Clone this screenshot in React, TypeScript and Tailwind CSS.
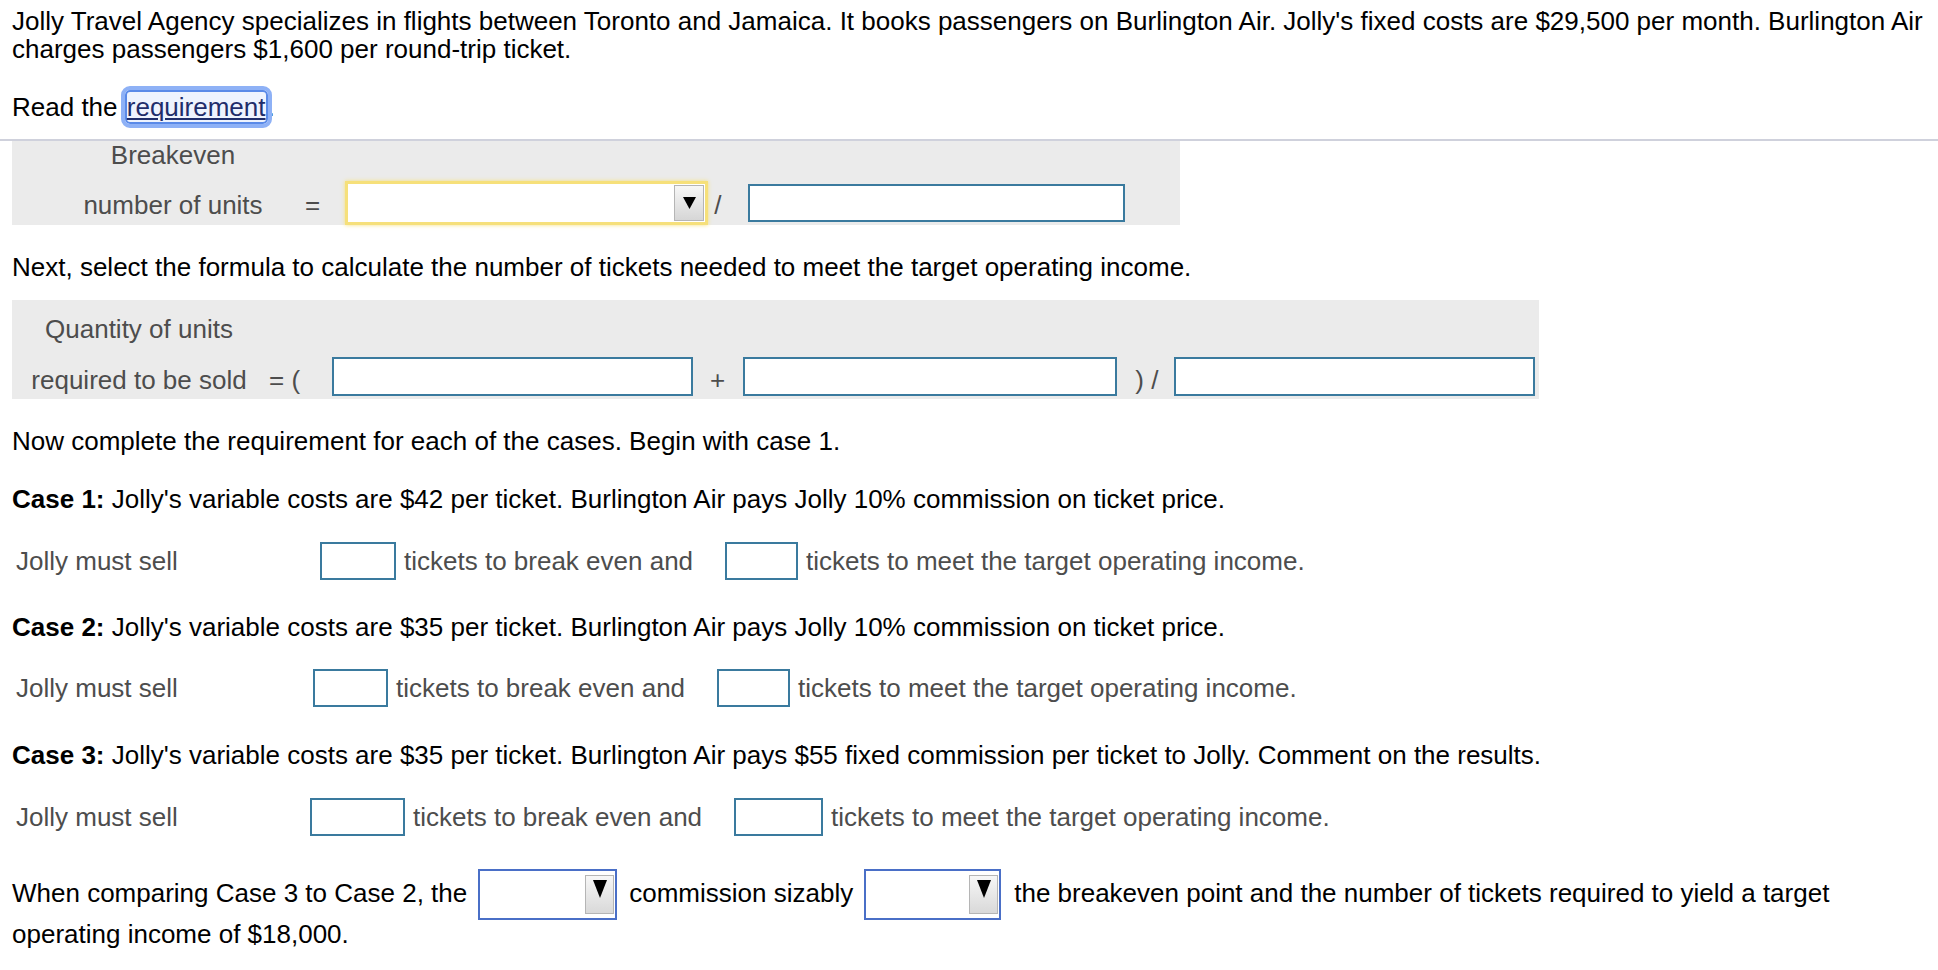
import React from "react";

function Arrow({ w = 13, h = 12 }: { w?: number; h?: number }) {
  return (
    <svg width={w} height={h} viewBox="0 0 10 10" preserveAspectRatio="none">
      <polygon points="0,0 10,0 5,10" fill="#000" />
    </svg>
  );
}

function Box({ w, h = "h-[38px]" }: { w: string; h?: string }) {
  return <span className={`inline-block ${w} ${h} border-2 border-[#3a7a9e] bg-white align-middle`} />;
}

function Select({ w }: { w: string }) {
  return (
    <span className={`flex ${w} h-[51px] border-2 border-[#4a6fc7] bg-white items-center justify-end pr-[1px]`}>
      <span className="flex flex-col items-center w-[29px] h-[39px] border border-[#b5b5b5] bg-gradient-to-b from-[#f7f7f7] to-[#d9d9d9] pt-[4px]">
        <Arrow w={14} h={18} />
      </span>
    </span>
  );
}

function CaseRow({ label, b1, b2 }: { label: string; b1: string; b2: string }) {
  return (
    <div className="flex items-center h-[42px] text-[#4d4d4d]">
      <span className={`${label} pl-[4px]`}>Jolly must sell</span>
      <Box w={b1} />
      <span className="ml-[8px]">tickets to break even and</span>
      <span className="ml-[32px] flex"><Box w={b2} /></span>
      <span className="ml-[8px]">tickets to meet the target operating income.</span>
    </div>
  );
}

export default function App() {
  return (
    <div className="bg-white min-h-screen text-[26px] leading-[28px] text-black" style={{ fontFamily: '"Liberation Sans", Arial, Helvetica, sans-serif' }}>
      <div className="px-[12px] pt-[7px]">
        <p>
          <span className="whitespace-nowrap">Jolly Travel Agency specializes in flights between Toronto and Jamaica. It books passengers on Burlington Air. Jolly's fixed costs are $29,500 per month. Burlington Air</span>
          <br />
          charges passengers $1,600 per round-trip ticket.
        </p>
        <p className="mt-[30px]">
          Read the{" "}
          <a className="text-[#1f2d6b] underline rounded-[5px] outline outline-[4px] outline-[#8eb1f6] border-2 border-[#5a8ae8] bg-[#eef3fe]" href="#">
            requirement
          </a>
          .
        </p>
      </div>
      <div className="mt-[18px] border-t-2 border-[#cfd1dc]" />
      <div className="px-[12px]">
        <div className="w-[1168px] bg-[#ebebeb] text-[#4d4d4d]">
          <div className="h-[40px] flex">
            <span className="ml-[36px] w-[250px] text-center">Breakeven</span>
          </div>
          <div className="h-[44px] flex items-center">
            <span className="ml-[36px] w-[250px] text-center mt-[4px]">number of units</span>
            <span className="ml-[7px] mt-[4px]">=</span>
            <span className="ml-[25px] flex items-center justify-end w-[363px] h-[44px] border-[3px] border-[#f6e07a] bg-white shadow-[0_0_4px_#f6e07a] pr-[1px]">
              <span className="flex items-center justify-center w-[30px] h-[36px] border border-[#b5b5b5] bg-gradient-to-b from-[#f7f7f7] to-[#d6d6d6]">
                <Arrow w={13} h={12} />
              </span>
            </span>
            <span className="ml-[6px] mt-[4px]">/</span>
            <span className="ml-[27px] flex"><Box w="w-[377px]" /></span>
          </div>
        </div>

        <p className="mt-[28px]">Next, select the formula to calculate the number of tickets needed to meet the target operating income.</p>

        <div className="mt-[19px] w-[1527px] bg-[#ebebeb] text-[#4d4d4d]">
          <div className="h-[57px] pt-[15px] flex">
            <span className="w-[254px] text-center">Quantity of units</span>
          </div>
          <div className="h-[42px] flex items-start">
            <span className="w-[254px] text-center mt-[9px]">required to be sold</span>
            <span className="ml-[3px] mt-[9px]">= (</span>
            <span className="ml-[32px] flex"><Box w="w-[361px]" h="h-[39px]" /></span>
            <span className="ml-[17px] mt-[9px]">+</span>
            <span className="ml-[18px] flex"><Box w="w-[374px]" h="h-[39px]" /></span>
            <span className="ml-[18px] mt-[9px]">) /</span>
            <span className="ml-[16px] flex"><Box w="w-[361px]" h="h-[39px]" /></span>
          </div>
        </div>

        <p className="mt-[28px]">Now complete the requirement for each of the cases. Begin with case 1.</p>

        <p className="mt-[30px]"><b>Case 1:</b> Jolly's variable costs are $42 per ticket. Burlington Air pays Jolly 10% commission on ticket price.</p>
        <div className="mt-[27px]">
          <CaseRow label="w-[308px]" b1="w-[76px]" b2="w-[73px]" />
        </div>

        <p className="mt-[31px]"><b>Case 2:</b> Jolly's variable costs are $35 per ticket. Burlington Air pays Jolly 10% commission on ticket price.</p>
        <div className="mt-[26px]">
          <CaseRow label="w-[301px]" b1="w-[75px]" b2="w-[73px]" />
        </div>

        <p className="mt-[32px]"><b>Case 3:</b> Jolly's variable costs are $35 per ticket. Burlington Air pays $55 fixed commission per ticket to Jolly. Comment on the results.</p>
        <div className="mt-[27px]">
          <CaseRow label="w-[298px]" b1="w-[95px]" b2="w-[89px]" />
        </div>

        <div className="mt-[31px] flex items-center h-[51px] whitespace-nowrap">
          <span className="-mt-[3px]">When comparing Case 3 to Case 2, the</span>
          <span className="ml-[11px]"><Select w="w-[139px]" /></span>
          <span className="ml-[12px] -mt-[3px]">commission sizably</span>
          <span className="ml-[11px]"><Select w="w-[137px]" /></span>
          <span className="ml-[13px] -mt-[3px]">the breakeven point and the number of tickets required to yield a target</span>
        </div>
        <p>operating income of $18,000.</p>
      </div>
    </div>
  );
}
